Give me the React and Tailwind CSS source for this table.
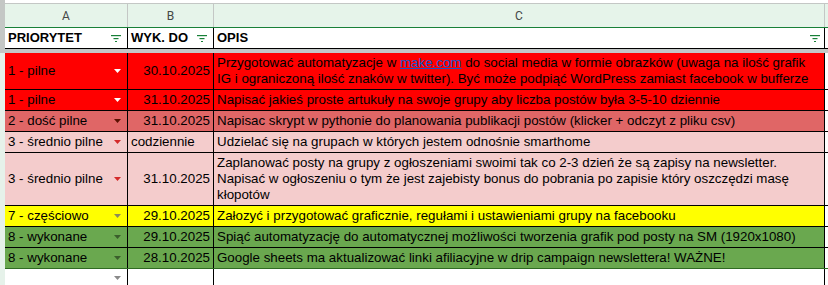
import React from "react";

const Arrow = ({ color }) => (
  <svg width="7" height="4" viewBox="0 0 7 4" className="shrink-0">
    <polygon points="0,0 7,0 3.5,4" fill={color} />
  </svg>
);

const FilterIcon = () => (
  <svg width="10" height="7" viewBox="0 0 10 7" className="shrink-0">
    <rect x="0" y="0" width="10" height="1.2" fill="#188038" />
    <rect x="2.5" y="3" width="5" height="1.2" fill="#188038" />
    <rect x="4" y="6" width="2" height="1" fill="#188038" />
  </svg>
);

const rows = [
  {
    prio: "1 - pilne",
    date: "30.10.2025",
    bg: "bg-[#ff0000]",
    arrow: "#ffffff",
    h: "h-[37px]",
    text: (
      <>
        Przygotować automatyzacje w{" "}
        <span className="text-[#1155cc] underline">make.com</span> do social media w formie obrazków (uwaga na ilość grafik
        <br />
        IG i ograniczoną ilość znaków w twitter). Być może podpiąć WordPress zamiast facebook w bufferze
      </>
    ),
  },
  {
    prio: "1 - pilne",
    date: "31.10.2025",
    bg: "bg-[#ff0000]",
    arrow: "#ffffff",
    h: "h-[21px]",
    text: "Napisać jakieś proste artukuły na swoje grupy aby liczba postów była 3-5-10 dziennie",
  },
  {
    prio: "2 - dość pilne",
    date: "31.10.2025",
    bg: "bg-[#e06666]",
    arrow: "#5b0f00",
    h: "h-[21px]",
    text: "Napisac skrypt w pythonie do planowania publikacji postów (klicker + odczyt z pliku csv)",
  },
  {
    prio: "3 - średnio pilne",
    date: "codziennie",
    dateLeft: true,
    bg: "bg-[#f4cccc]",
    arrow: "#d42a2a",
    h: "h-[21px]",
    text: "Udzielać się na grupach w których jestem odnośnie smarthome",
  },
  {
    prio: "3 - średnio pilne",
    date: "31.10.2025",
    bg: "bg-[#f4cccc]",
    arrow: "#d42a2a",
    h: "h-[53px]",
    text: (
      <>
        Zaplanować posty na grupy z ogłoszeniami swoimi tak co 2-3 dzień że są zapisy na newsletter.
        <br />
        Napisać w ogłoszeniu o tym że jest zajebisty bonus do pobrania po zapisie który oszczędzi masę
        <br />
        kłopotów
      </>
    ),
  },
  {
    prio: "7 - częściowo",
    date: "29.10.2025",
    bg: "bg-[#ffff00]",
    arrow: "#8a8a5c",
    h: "h-[21px]",
    text: "Załozyć i przygotować graficznie, regułami i ustawieniami grupy na facebooku",
  },
  {
    prio: "8 - wykonane",
    date: "29.10.2025",
    bg: "bg-[#6aa84f]",
    arrow: "#3b5e2c",
    h: "h-[21px]",
    text: "Spiąć automatyzację do automatycznej możliwości tworzenia grafik pod posty na SM (1920x1080)",
  },
  {
    prio: "8 - wykonane",
    date: "28.10.2025",
    bg: "bg-[#6aa84f]",
    arrow: "#3b5e2c",
    h: "h-[21px]",
    text: "Google sheets ma aktualizować linki afiliacyjne w drip campaign newslettera! WAŻNE!",
    last: true,
  },
];

const DataRow = ({ row }) => (
  <div
    className={`flex ${row.h} border-b ${row.last ? "border-[#2f6b22]" : "border-black"}`}
  >
    <div className={`w-[123px] ${row.bg} border-r border-black flex items-center justify-between pl-[3px] pr-[6px]`}>
      <span className="whitespace-nowrap">{row.prio}</span>
      <Arrow color={row.arrow} />
    </div>
    <div
      className={`w-[86px] ${row.bg} border-r border-black flex items-center px-[3px] ${
        row.dateLeft ? "justify-start" : "justify-end"
      }`}
    >
      <span className="whitespace-nowrap">{row.date}</span>
    </div>
    <div className={`w-[611px] ${row.bg} border-r border-black flex items-center pl-[3px] overflow-hidden`}>
      <span className="whitespace-nowrap leading-[16px]">{row.text}</span>
    </div>
    <div className="w-[3px] bg-white" />
  </div>
);

const App = () => {
  return (
    <div className="w-[828px] h-[285px] overflow-hidden bg-white flex text-[13.33px] text-black leading-[16px] font-['Liberation_Sans',Arial,sans-serif]">
      <div className="w-[5px] flex flex-col shrink-0">
        <div className="h-[53px] bg-[#c4c7c5]" />
        <div className="flex-1 bg-[#e6f2ea]" />
      </div>

      <div className="w-[823px] flex flex-col">
        {/* column letters */}
        <div className="h-[3px] bg-white" />
        <div className="flex h-[25px] border-t border-b border-t-[#c4c7c5] border-b-[#188038] bg-[#e6f4ea] text-[12px] text-[#444746] font-['Roboto',sans-serif]">
          <div className="w-[123px] border-r border-[#c4c7c5] flex items-center justify-center">A</div>
          <div className="w-[86px] border-r border-[#c4c7c5] flex items-center justify-center">B</div>
          <div className="w-[611px] border-r border-[#c4c7c5] flex items-center justify-center">C</div>
          <div className="w-[3px]" />
        </div>

        {/* header */}
        <div className="flex h-[21px] border-b border-black bg-white font-bold text-[13px]">
          <div className="w-[123px] border-r border-black flex items-center justify-between pl-[3px] pr-[6px]">
            <span>PRIORYTET</span>
            <FilterIcon />
          </div>
          <div className="w-[86px] border-r border-black flex items-center justify-between pl-[3px] pr-[6px]">
            <span>WYK. DO</span>
            <FilterIcon />
          </div>
          <div className="w-[611px] border-r border-black flex items-center justify-between pl-[3px] pr-[4px]">
            <span>OPIS</span>
            <FilterIcon />
          </div>
          <div className="w-[3px]" />
        </div>

        {/* frozen divider */}
        <div className="h-[4px] bg-[#c4c7c5]" />

        {rows.map((row, i) => (
          <DataRow key={i} row={row} />
        ))}

        {/* empty row */}
        <div className="flex flex-1 bg-white">
          <div className="w-[123px] border-r border-black flex items-start justify-end pr-[6px] pt-[7px]">
            <Arrow color="#8a8a8a" />
          </div>
          <div className="w-[86px] border-r border-black" />
          <div className="w-[611px] border-r border-black" />
          <div className="w-[3px]" />
        </div>
      </div>
    </div>
  );
};

export default App;
